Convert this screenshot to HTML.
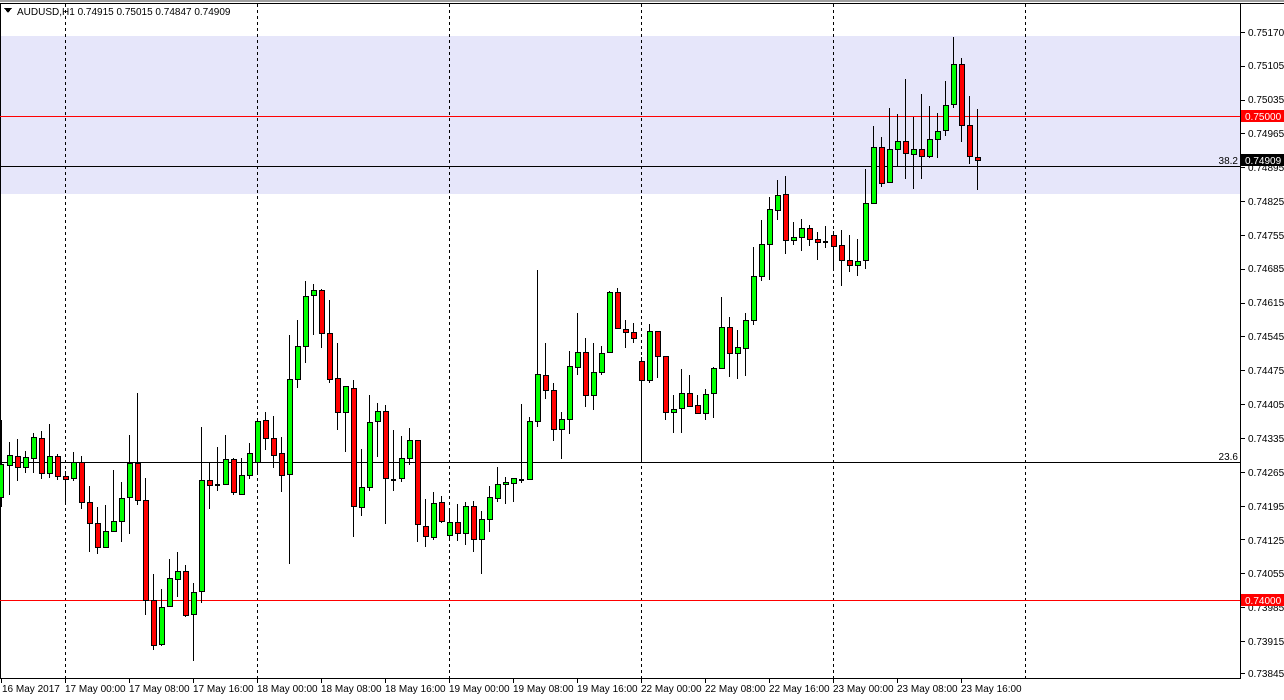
<!DOCTYPE html>
<html><head><meta charset="utf-8"><style>
body{margin:0;background:#fff;width:1284px;height:700px;overflow:hidden;font-family:"Liberation Sans",sans-serif}
svg{display:block}
text{font-family:"Liberation Sans",sans-serif;font-size:10px}
</style></head><body>
<svg id="s" width="1284" height="700" xmlns="http://www.w3.org/2000/svg" shape-rendering="crispEdges">
<rect x="0" y="0" width="1284" height="700" fill="#fff"/>
<rect x="0" y="0" width="1284" height="2" fill="#a0a0a0"/>
<rect x="0" y="36" width="1240" height="158" fill="#e6e6fa"/>
<line x1="0.5" y1="3" x2="0.5" y2="678" stroke="#000"/>
<line x1="0" y1="3.5" x2="1284" y2="3.5" stroke="#000"/>
<line x1="1240.5" y1="3" x2="1240.5" y2="678" stroke="#000"/>
<line x1="0" y1="678.5" x2="1241" y2="678.5" stroke="#000"/>
<g stroke="#000" stroke-dasharray="3,3">
<line x1="65.5" y1="4" x2="65.5" y2="678"/><line x1="257.5" y1="4" x2="257.5" y2="678"/><line x1="449.5" y1="4" x2="449.5" y2="678"/><line x1="641.5" y1="4" x2="641.5" y2="678"/><line x1="833.5" y1="4" x2="833.5" y2="678"/><line x1="1025.5" y1="4" x2="1025.5" y2="678"/>
</g>
<line x1="0" y1="116.5" x2="1240" y2="116.5" stroke="#f00"/>
<line x1="0" y1="600.5" x2="1240" y2="600.5" stroke="#f00"/>
<line x1="0" y1="166.5" x2="1240" y2="166.5" stroke="#000"/>
<line x1="0" y1="462.5" x2="1240" y2="462.5" stroke="#000"/>
<text x="1238" y="164" text-anchor="end">38.2</text>
<text x="1238" y="460" text-anchor="end">23.6</text>
<g id="c"></g>
<path d="M4 8 L12 8 L8 13 Z" fill="#000"/>
<text x="17" y="15">AUDUSD,H1  0.74915 0.75015 0.74847 0.74909</text>
<g id="ax" fill="#000"></g>
<g>
<text x="1248" y="36">0.75170</text><text x="1248" y="69">0.75105</text><text x="1248" y="103">0.75035</text>
<text x="1248" y="137">0.74965</text><text x="1248" y="171">0.74895</text><text x="1248" y="205">0.74825</text>
<text x="1248" y="239">0.74755</text><text x="1248" y="272">0.74685</text><text x="1248" y="306">0.74615</text>
<text x="1248" y="340">0.74545</text><text x="1248" y="374">0.74475</text><text x="1248" y="408">0.74405</text>
<text x="1248" y="442">0.74335</text><text x="1248" y="476">0.74265</text><text x="1248" y="510">0.74195</text>
<text x="1248" y="544">0.74125</text><text x="1248" y="577">0.74055</text><text x="1248" y="611">0.73985</text>
<text x="1248" y="645">0.73915</text><text x="1248" y="677">0.73845</text>
</g>
<rect x="1241" y="110" width="43" height="12" fill="#f00"/>
<text x="1245" y="120" fill="#fff">0.75000</text>
<rect x="1241" y="594" width="43" height="12" fill="#f00"/>
<text x="1245" y="604" fill="#fff">0.74000</text>
<rect x="1241" y="154" width="43" height="12" fill="#000"/>
<text x="1245" y="164" fill="#fff">0.74909</text>
<g>
<text x="2" y="692">16 May 2017</text>
<text x="65" y="692">17 May 00:00</text><text x="129" y="692">17 May 08:00</text><text x="193" y="692">17 May 16:00</text>
<text x="257" y="692">18 May 00:00</text><text x="321" y="692">18 May 08:00</text><text x="385" y="692">18 May 16:00</text>
<text x="449" y="692">19 May 00:00</text><text x="513" y="692">19 May 08:00</text><text x="577" y="692">19 May 16:00</text>
<text x="641" y="692">22 May 00:00</text><text x="705" y="692">22 May 08:00</text><text x="769" y="692">22 May 16:00</text>
<text x="833" y="692">23 May 00:00</text><text x="897" y="692">23 May 08:00</text><text x="961" y="692">23 May 16:00</text>
</g>
</svg>
<script>
var d=[
[420,507,464,497,'g'],[442,495,455,465,'g'],[439,481,456,467,'r'],[451,473,457,467,'g'],[433,473,437,458,'g'],[431,479,438,473,'r'],[424,478,456,473,'g'],[454,480,456,476,'r'],[471,503,476,479,'r'],[452,481,462,478,'g'],
[456,509,462,502,'r'],[486,552,502,523,'r'],[507,554,523,547,'r'],[505,547,531,547,'g'],[470,532,521,531,'g'],[482,542,498,521,'g'],[435,534,463,497,'g'],[393,505,463,500,'r'],[478,615,500,600,'r'],[574,650,600,645,'r'],
[589,646,607,644,'g'],[559,606,578,606,'g'],[552,597,571,579,'g'],[565,617,571,615,'r'],[583,661,592,614,'g'],[427,603,480,591,'g'],[463,509,480,485,'r'],[447,491,484,484,'g'],[435,485,459,484,'g'],[458,495,459,492,'r'],
[458,495,475,494,'g'],[443,479,453,475,'g'],[418,473,421,462,'g'],[412,450,420,438,'r'],[416,468,438,455,'r'],[437,492,453,475,'r'],[335,564,379,474,'g'],[320,388,346,379,'g'],[281,363,296,346,'g'],[284,335,290,295,'g'],
[289,348,290,333,'r'],[300,383,333,379,'r'],[343,430,378,412,'r'],[386,452,386,412,'g'],[380,537,388,506,'r'],[449,516,487,507,'g'],[395,491,422,487,'g'],[403,457,411,421,'g'],[405,524,411,478,'r'],[430,491,479,479,'g'],
[436,482,458,478,'g'],[428,465,440,458,'g'],[440,542,440,524,'r'],[499,547,526,536,'r'],[492,540,503,537,'g'],[496,523,502,521,'r'],[511,540,522,535,'g'],[504,541,522,533,'r'],[502,545,506,533,'g'],[501,552,506,539,'r'],
[511,574,519,539,'g'],[486,532,497,519,'g'],[467,502,484,498,'g'],[477,504,482,484,'g'],[478,502,478,483,'g'],[404,483,479,479,'g'],[417,479,421,479,'g'],[270,427,374,421,'g'],[343,399,375,390,'r'],[383,441,390,429,'r'],
[412,459,419,429,'g'],[351,434,366,419,'g'],[313,375,352,367,'g'],[338,407,352,395,'r'],[343,410,372,395,'g'],[346,375,353,372,'g'],[291,352,292,352,'g'],[288,329,292,328,'r'],[320,348,329,332,'r'],[323,343,332,338,'r'],
[357,462,361,380,'r'],[324,383,331,380,'g'],[331,378,331,356,'r'],[356,420,356,412,'r'],[395,433,409,412,'g'],[369,433,393,408,'g'],[375,406,393,406,'r'],[395,414,405,413,'r'],[389,420,394,413,'g'],[367,418,368,393,'g'],
[297,369,327,368,'g'],[317,377,327,353,'r'],[330,379,347,353,'g'],[313,376,320,348,'g'],[247,325,276,320,'g'],[220,281,244,276,'g'],[197,280,209,244,'g'],[180,220,195,210,'g'],[176,254,194,240,'r'],[222,245,237,240,'g'],
[219,251,228,237,'g'],[225,246,228,239,'r'],[232,260,239,242,'r'],[226,248,241,241,'g'],[231,271,235,246,'r'],[230,286,245,260,'r'],[235,272,260,265,'r'],[239,276,261,265,'g'],[169,269,203,260,'g'],[126,204,147,203,'g'],
[137,187,147,183,'r'],[108,182,149,182,'g'],[114,166,141,149,'g'],[79,179,141,153,'r'],[117,189,149,154,'g'],[94,179,149,156,'r'],[106,158,139,156,'g'],[113,158,131,139,'g'],[81,136,105,130,'g'],[37,108,64,104,'g'],
[58,142,64,125,'r'],[96,164,125,156,'r'],[109,190,157,160,'r']];
var s='';
d.forEach(function(c,i){var x=1+8*i;
s+='<line x1="'+(x+0.5)+'" y1="'+c[0]+'" x2="'+(x+0.5)+'" y2="'+c[1]+'" stroke="#000"/>';
var h=c[3]-c[2];
if(h<1){s+='<rect x="'+(x-2)+'" y="'+c[2]+'" width="5" height="2" fill="#000"/>';}
else s+='<rect x="'+(x-2)+'.5" y="'+c[2]+'.5" width="5" height="'+h+'" fill="'+(c[4]=='g'?'#00ff00':'#ff0000')+'" stroke="#000"/>';});
document.getElementById('c').innerHTML=s;
var a='';for(var k=0;k<20;k++){var y=Math.round(32+k*33.83);if(k==19)y=673;a+='<rect x="1241" y="'+y+'" width="4" height="1"/>';}
for(var k=0;k<16;k++){var x=k==0?1:65+64*(k-1);a+='<rect x="'+x+'" y="679" width="1" height="4"/>';}
document.getElementById('ax').innerHTML=a;
</script>
</body></html>
